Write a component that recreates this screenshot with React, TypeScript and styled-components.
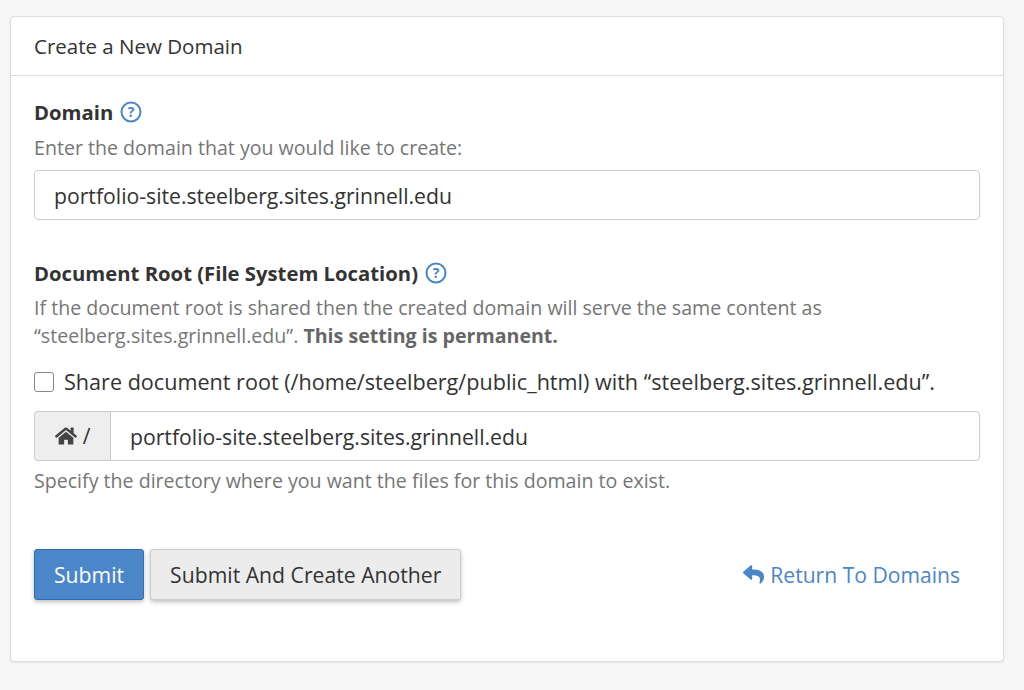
import React from "react";
import styled, { createGlobalStyle } from "styled-components";
import { FaHome, FaReply } from "react-icons/fa";

const Global = createGlobalStyle`
  html, body { margin: 0; background: #f6f6f6; font-family: "Open Sans", "Noto Sans", sans-serif; color: #333; }
  * { box-sizing: border-box; }
`;

const Page = styled.div`
  padding: 16px 20px 0 10px;
  height: 690px;
`;

const Panel = styled.div`
  background: #fff;
  border: 1px solid #ddd;
  border-radius: 4px;
  box-shadow: 0 1px 2px rgba(0,0,0,0.08);
  height: 646px;
`;

const Header = styled.div`
  height: 59px;
  border-bottom: 1px solid #ddd;
  padding: 0 23px;
  display: flex;
  align-items: center;
  font-size: 20.5px;
  color: #333;
`;

const Body = styled.div`
  padding: 20px 23px 0 23px;
`;

const Label = styled.div<{ $top?: number }>`
  font-weight: 700;
  font-size: 20.3px;
  display: flex;
  align-items: center;
  gap: 7px;
  height: 32px;
  color: #333;
  margin-top: ${p => p.$top ?? 0}px;
`;

const Help = styled.div<{ $top: number }>`
  font-size: 19.6px;
  color: #767676;
  line-height: 28px;
  margin-top: ${p => p.$top}px;
  b { font-weight: 700; color: #666; }
`;

const Input = styled.div<{ $grouped?: boolean }>`
  height: 50px;
  border: 1px solid #ccc;
  border-radius: ${p => (p.$grouped ? "0 4px 4px 0" : "4px")};
  flex: 1;
  display: flex;
  align-items: center;
  padding-left: 19px;
  font-size: 21.2px;
  color: #333;
`;

const CheckRow = styled.label`
  display: flex;
  align-items: center;
  gap: 10px;
  font-size: 21.6px;
  margin-top: 17px;
  height: 28px;
  white-space: nowrap;
`;

const Box = styled.span`
  width: 20px;
  height: 20px;
  flex: none;
  border: 1px solid #888;
  border-radius: 3px;
  margin-top: 2px;
`;

const Group = styled.div<{ $top: number }>`
  display: flex;
  margin-top: ${p => p.$top}px;
`;

const Addon = styled.div`
  width: 76px;
  height: 50px;
  background: #eee;
  border: 1px solid #ccc;
  border-right: none;
  border-radius: 4px 0 0 4px;
  display: flex;
  align-items: center;
  justify-content: center;
  gap: 6px;
  font-size: 21px;
  color: #333;
`;

const Actions = styled.div`
  display: flex;
  align-items: center;
  margin-top: 54px;
  gap: 6px;
`;

const Button = styled.button<{ $primary?: boolean }>`
  height: 51px;
  padding: 0 19px;
  font-family: inherit;
  font-size: 21.2px;
  border-radius: 3px;
  border: 1px solid ${p => (p.$primary ? "#2f6db0" : "#ccc")};
  background: ${p => (p.$primary ? "#4a86c8" : "#ececec")};
  color: ${p => (p.$primary ? "#fff" : "#333")};
  box-shadow: 0 2px 4px rgba(0,0,0,0.25);
`;

const Return = styled.a`
  margin-left: auto;
  margin-right: 20px;
  color: #4a86c8;
  font-size: 21.1px;
  display: flex;
  align-items: center;
  gap: 6px;
`;

const Q = () => (
  <svg width="22" height="22" viewBox="0 0 22 22">
    <circle cx="11" cy="11" r="9.5" fill="none" stroke="#4a86c8" strokeWidth="2" />
    <text x="11" y="16" textAnchor="middle" fontSize="14" fontWeight="700" fill="#4a86c8" fontFamily="Open Sans, sans-serif">?</text>
  </svg>
);

export default function App() {
  return (
    <Page>
      <Global />
      <Panel>
        <Header>Create a New Domain</Header>
        <Body>
          <Label>Domain <Q /></Label>
          <Help $top={6}>Enter the domain that you would like to create:</Help>
          <Group $top={8}>
            <Input>portfolio-site.steelberg.sites.grinnell.edu</Input>
          </Group>
          <Label $top={37}>Document Root (File System Location) <Q /></Label>
          <Help $top={5}>
            If the document root is shared then the created domain will serve the same content as
            <br />
            “steelberg.sites.grinnell.edu”. <b>This setting is permanent.</b>
          </Help>
          <CheckRow>
            <Box />
            Share document root (/home/steelberg/public_html) with “steelberg.sites.grinnell.edu”.
          </CheckRow>
          <Group $top={16}>
            <Addon><FaHome size={22} color="#444" /> /</Addon>
            <Input $grouped>portfolio-site.steelberg.sites.grinnell.edu</Input>
          </Group>
          <Help $top={6}>Specify the directory where you want the files for this domain to exist.</Help>
          <Actions>
            <Button $primary>Submit</Button>
            <Button>Submit And Create Another</Button>
            <Return><FaReply size={21} /> Return To Domains</Return>
          </Actions>
        </Body>
      </Panel>
    </Page>
  );
}
